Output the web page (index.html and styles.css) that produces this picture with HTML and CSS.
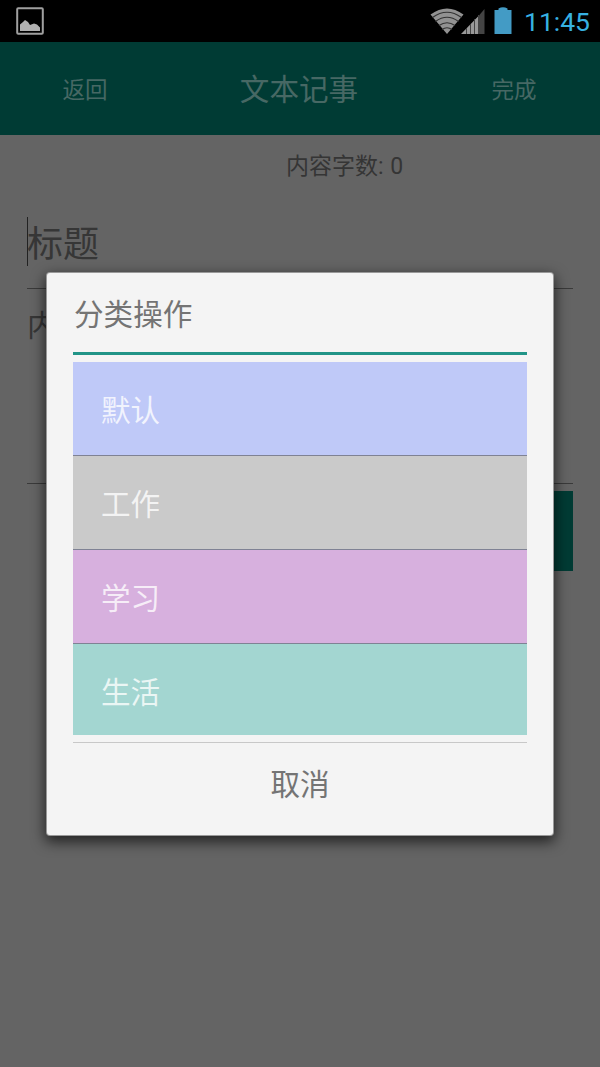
FILE: index.html
```html
<!DOCTYPE html>
<html lang="zh-CN">
<head>
<meta charset="utf-8">
<title>文本记事</title>
<link rel="stylesheet" href="styles.css">
</head>
<body>
<div class="screen">
  <div class="status">
    <svg class="status-picture" width="28" height="28" viewBox="0 0 28 28">
      <rect x="1.2" y="1.2" width="25.6" height="25.6" rx="1" fill="none" stroke="#a0a0a0" stroke-width="2"/>
      <path d="M4 24v-6.500l3-2.500 2-2 3 2 2 3 4-1.500 3 1 3 3V24z" fill="#b0b0b0"/>
    </svg>
    <div class="status-right">
      <svg class="status-wifi" width="34" height="26" viewBox="0 0 34 26">
        <path d="M17 26L.5 6.500Q17-5.500 33.500 6.500Z" fill="#929292"/>
        <path d="M2.500 9.500Q17-1 31.500 9.500M5.500 13.500Q17 5 28.500 13.500M9 17.500Q17 12 25 17.500M12 21.500Q17 18 22 21.500" fill="none" stroke="#333" stroke-width="1.200"/>
      </svg>
      <svg class="status-signal" width="24" height="26" viewBox="0 0 24 26">
        <path d="M0 26L17 8.500V26z" fill="#999"/>
        <path d="M18 7.500L23.500 1v25H18z" fill="#444"/>
        <path d="M5.500 20v6M9.500 16v10M13.500 11v15M17.500 7v19" stroke="#444" stroke-width="1"/>
      </svg>
      <svg class="status-battery" width="18" height="27" viewBox="0 0 18 27">
        <path d="M.5 3h4V1.500Q9-.8 13.500 1.500V3h4v24H.5z" fill="#439bc5"/>
      </svg>
      <span class="clock">11:45</span>
    </div>
  </div>
  <div class="appbar">
    <span class="bar-action">返回</span>
    <span class="bar-title">文本记事</span>
    <span class="bar-action">完成</span>
  </div>
  <div class="editor">
    <div class="count">内容字数: <span class="count-value">0</span></div>
    <div class="field field-title"><span class="caret"></span><span class="hint">标题</span></div>
    <div class="field field-body">内</div>
    <div class="submit"></div>
  </div>
  <div class="dialog">
    <div class="dialog-title">分类操作</div>
    <div class="list">
      <div class="item item-default">默认</div>
      <div class="item item-work">工作</div>
      <div class="item item-study">学习</div>
      <div class="item item-life">生活</div>
    </div>
    <div class="cancel">取消</div>
  </div>
</div>
</body>
</html>
```
FILE: styles.css
```css
* { box-sizing: border-box; }
body {
  margin: 0;
  font-family: Roboto, "Noto Sans CJK SC", sans-serif;
}
.screen {
  position: relative;
  width: 600px;
  height: 1067px;
  overflow: hidden;
  background: #646464;
}
.status {
  display: flex;
  justify-content: space-between;
  height: 42px;
  padding: 7px 10px 0 16px;
  background: #000;
}
.status-right { display: flex; }
.status-wifi { margin-top: 1px; }
.status-signal { margin: 1px 0 0 -3px; }
.status-battery { margin-left: 9px; }
.clock {
  width: 66px;
  margin-left: 12px;
  font-size: 26.5px;
  line-height: 30px;
  color: #37b1e2;
  white-space: nowrap;
}
.appbar {
  display: grid;
  grid-template-columns: 170px 258px 172px;
  align-items: center;
  height: 93px;
  padding-top: 3px;
  background: #003b34;
  text-align: center;
}
.bar-action { font-size: 22.5px; line-height: 34px; color: #476864; }
.bar-title { font-size: 29.6px; line-height: 44px; color: #476864; }
.editor { padding: 14px 27px 0; color: #363636; }
.count {
  height: 35px;
  padding-left: 259px;
  font-size: 23px;
  line-height: 36px;
  color: #353535;
}
.count-value { margin-left: 1px; }
.field { border-bottom: 1px solid #3a3a3a; }
.field-title {
  display: flex;
  align-items: center;
  height: 105px;
  padding-top: 13px;
  font-size: 36px;
  line-height: 54px;
}
.hint { margin: 4px 0 0 -1px; }
.caret { flex: none; width: 1px; height: 49px; margin-top: -2px; background: #222; }
.field-body {
  height: 195px;
  padding-top: 15px;
  font-size: 30px;
  line-height: 44px;
}
.submit {
  width: 273px;
  height: 80px;
  margin: 7px 0 0 auto;
  background: #003b34;
}
.dialog {
  position: absolute;
  left: 47px;
  top: 273px;
  width: 506px;
  height: 562px;
  padding: 0 26px;
  border-radius: 3px;
  background: #f4f4f4;
  box-shadow: 0 0 0 1px #999, 0 5px 14px 2px rgba(0, 0, 0, .65);
  color: #747474;
}
.dialog-title {
  height: 82px;
  padding: 20px 1px 0;
  border-bottom: 3px solid #219487;
  font-size: 29.6px;
  line-height: 44px;
}
.list { padding: 7px 0; border-bottom: 1px solid #c8c8c8; }
.item {
  height: 94px;
  padding: 2px 0 0 28px;
  border-bottom: 1px solid #7f8294;
  font-size: 29.6px;
  line-height: 95px;
  color: rgba(255, 255, 255, .78);
}
.item-default { background: #bfc9f8; }
.item-work { background: #cacaca; }
.item-study { background: #d7b0de; }
.item-life { height: 91px; border-bottom: 0; background: #a3d6d1; }
.cancel {
  padding-top: 20px;
  font-size: 29.6px;
  line-height: 44px;
  text-align: center;
}
```
